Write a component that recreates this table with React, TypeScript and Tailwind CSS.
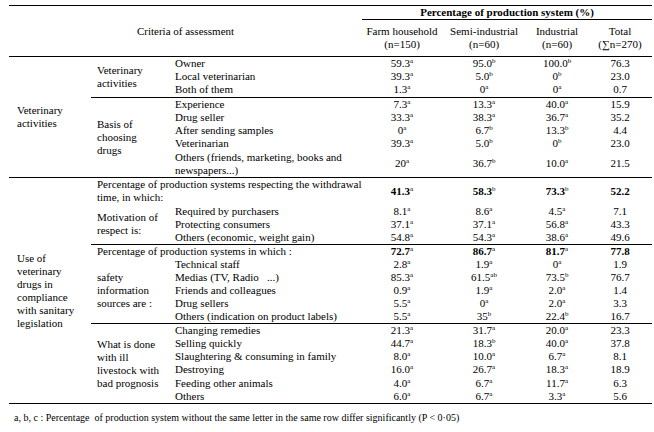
import React from "react";

type V = [string, string];

const FONT = { fontFamily: '"Liberation Serif", "Times New Roman", serif' };

function Val({ v, bold }: { v: V; bold?: boolean }) {
  return (
    <span className={bold ? "font-bold" : ""}>
      {v[0]}
      {v[1] && <sup className="text-[7px] -top-[4px] font-normal">{v[1]}</sup>}
    </span>
  );
}

// one data row: label in col 3 (or spanning cols 2-3), then 4 value cells
function Cells({
  vals,
  total,
  bold,
  top,
}: {
  vals: V[];
  total: string;
  bold?: boolean;
  top?: boolean;
}) {
  const b = top ? "border-t border-black" : "";
  return (
    <>
      {vals.map((v, i) => (
        <td key={i} className={`p-0 text-center ${b}`}>
          <Val v={v} bold={bold} />
        </td>
      ))}
      <td className={`p-0 text-center ${b} ${bold ? "font-bold" : ""}`}>{total}</td>
    </>
  );
}

const lbl = "p-0 pl-[5px] text-left whitespace-nowrap";
const grp = "p-0 pl-[6px] text-left align-middle border-t border-black";

export default function App() {
  return (
    <div className="min-h-[432px] w-[654px] bg-white pl-[9px] pt-[5px] text-black" style={FONT}>
      <table className="w-[643px] table-fixed border-collapse text-[11px] leading-[13px]">
        <colgroup>
          <col className="w-[82px]" />
          <col className="w-[79px]" />
          <col className="w-[192px]" />
          <col className="w-[80px]" />
          <col className="w-[84px]" />
          <col className="w-[62px]" />
          <col className="w-[64px]" />
        </colgroup>
        <thead>
          <tr className="h-[14px]">
            <th colSpan={3} rowSpan={2} className="border-t border-black p-0 text-center font-normal">
              Criteria of assessment
            </th>
            <th colSpan={4} className="border-y border-black p-0 text-center font-bold">
              Percentage of production system (%)
            </th>
          </tr>
          <tr className="h-[37px]">
            <th className="p-0 font-normal">Farm household<br />(n=150)</th>
            <th className="p-0 font-normal">Semi-industrial<br />(n=60)</th>
            <th className="p-0 font-normal">Industrial<br />(n=60)</th>
            <th className="p-0 font-normal">Total<br />(∑n=270)</th>
          </tr>
        </thead>
        <tbody>
          {/* Veterinary activities */}
          <tr className="h-[13px]">
            <td rowSpan={8} className="border-t border-black p-0 pl-2 text-left align-middle">
              Veterinary<br />activities
            </td>
            <td rowSpan={3} className={grp}>Veterinary<br />activities</td>
            <td className={`${lbl} border-t border-black`}>Owner</td>
            <Cells top vals={[["59.3", "a"], ["95.0", "b"], ["100.0", "b"]]} total="76.3" />
          </tr>
          <tr className="h-[13px]">
            <td className={lbl}>Local veterinarian</td>
            <Cells vals={[["39.3", "a"], ["5.0", "b"], ["0", "b"]]} total="23.0" />
          </tr>
          <tr className="h-[14px]">
            <td className={lbl}>Both of them</td>
            <Cells vals={[["1.3", "a"], ["0", "a"], ["0", "a"]]} total="0.7" />
          </tr>
          <tr className="h-[13px]">
            <td rowSpan={5} className={grp}>Basis of<br />choosing<br />drugs</td>
            <td className={`${lbl} border-t border-black`}>Experience</td>
            <Cells top vals={[["7.3", "a"], ["13.3", "a"], ["40.0", "a"]]} total="15.9" />
          </tr>
          <tr className="h-[13px]">
            <td className={lbl}>Drug seller</td>
            <Cells vals={[["33.3", "a"], ["38.3", "a"], ["36.7", "a"]]} total="35.2" />
          </tr>
          <tr className="h-[13px]">
            <td className={lbl}>After sending samples</td>
            <Cells vals={[["0", "a"], ["6.7", "b"], ["13.3", "b"]]} total="4.4" />
          </tr>
          <tr className="h-[14px]">
            <td className={lbl}>Veterinarian</td>
            <Cells vals={[["39.3", "a"], ["5.0", "b"], ["0", "b"]]} total="23.0" />
          </tr>
          <tr className="h-[27px]">
            <td className={lbl}>Others (friends, marketing, books and<br />newspapers...)</td>
            <Cells vals={[["20", "a"], ["36.7", "b"], ["10.0", "a"]]} total="21.5" />
          </tr>

          {/* Use of veterinary drugs */}
          <tr className="h-[27px]">
            <td rowSpan={19} className="border-t border-black p-0 pl-2 text-left align-middle">
              Use of<br />veterinary<br />drugs in<br />compliance<br />with sanitary<br />legislation
            </td>
            <td colSpan={2} className="border-t border-black p-0 pl-[6px] text-left whitespace-nowrap">
              Percentage of production systems respecting the withdrawal<br />time, in which:
            </td>
            <Cells top bold vals={[["41.3", "a"], ["58.3", "b"], ["73.3", "b"]]} total="52.2" />
          </tr>
          <tr className="h-[13px]">
            <td rowSpan={3} className="p-0 pl-[6px] text-left align-middle">Motivation of<br />respect is:</td>
            <td className={lbl}>Required by purchasers</td>
            <Cells vals={[["8.1", "a"], ["8.6", "a"], ["4.5", "a"]]} total="7.1" />
          </tr>
          <tr className="h-[13px]">
            <td className={lbl}>Protecting consumers</td>
            <Cells vals={[["37.1", "a"], ["37.1", "a"], ["56.8", "a"]]} total="43.3" />
          </tr>
          <tr className="h-[14px]">
            <td className={lbl}>Others (economic, weight gain)</td>
            <Cells vals={[["54.8", "a"], ["54.3", "a"], ["38.6", "a"]]} total="49.6" />
          </tr>
          <tr className="h-[13px]">
            <td colSpan={2} className="border-t border-black p-0 pl-[6px] text-left whitespace-nowrap">
              Percentage of production systems in which :
            </td>
            <Cells top bold vals={[["72.7", "a"], ["86.7", "a"], ["81.7", "a"]]} total="77.8" />
          </tr>
          <tr className="h-[13px]">
            <td rowSpan={5} className="p-0 pl-[6px] text-left align-middle">safety<br />information<br />sources are :</td>
            <td className={lbl}>Technical staff</td>
            <Cells vals={[["2.8", "a"], ["1.9", "a"], ["0", "a"]]} total="1.9" />
          </tr>
          <tr className="h-[13px]">
            <td className={lbl}>Medias (TV, Radio &nbsp; ...)</td>
            <Cells vals={[["85.3", "a"], ["61.5", "ab"], ["73.5", "b"]]} total="76.7" />
          </tr>
          <tr className="h-[13px]">
            <td className={lbl}>Friends and colleagues</td>
            <Cells vals={[["0.9", "a"], ["1.9", "a"], ["2.0", "a"]]} total="1.4" />
          </tr>
          <tr className="h-[13px]">
            <td className={lbl}>Drug sellers</td>
            <Cells vals={[["5.5", "a"], ["0", "a"], ["2.0", "a"]]} total="3.3" />
          </tr>
          <tr className="h-[13px]">
            <td className={lbl}>Others (indication on product labels)</td>
            <Cells vals={[["5.5", "a"], ["35", "b"], ["22.4", "b"]]} total="16.7" />
          </tr>
          <tr className="h-[13px]">
            <td rowSpan={6} className={grp}>What is done<br />with ill<br />livestock with<br />bad prognosis</td>
            <td className={`${lbl} border-t border-black`}>Changing remedies</td>
            <Cells top vals={[["21.3", "a"], ["31.7", "a"], ["20.0", "a"]]} total="23.3" />
          </tr>
          <tr className="h-[13px]">
            <td className={lbl}>Selling quickly</td>
            <Cells vals={[["44.7", "a"], ["18.3", "b"], ["40.0", "a"]]} total="37.8" />
          </tr>
          <tr className="h-[13px]">
            <td className={lbl}>Slaughtering &amp; consuming in family</td>
            <Cells vals={[["8.0", "a"], ["10.0", "a"], ["6.7", "a"]]} total="8.1" />
          </tr>
          <tr className="h-[13px]">
            <td className={lbl}>Destroying</td>
            <Cells vals={[["16.0", "a"], ["26.7", "a"], ["18.3", "a"]]} total="18.9" />
          </tr>
          <tr className="h-[14px]">
            <td className={lbl}>Feeding other animals</td>
            <Cells vals={[["4.0", "a"], ["6.7", "a"], ["11.7", "a"]]} total="6.3" />
          </tr>
          <tr className="h-[13px] border-b border-black">
            <td className={lbl}>Others</td>
            <Cells vals={[["6.0", "a"], ["6.7", "a"], ["3.3", "a"]]} total="5.6" />
          </tr>
        </tbody>
      </table>
      <p className="mt-[8px] pl-[5px] text-[10px] leading-[12px]">
        a, b, c : Percentage &nbsp;of production system without the same letter in the same row differ significantly (P &lt; 0·05)
      </p>
    </div>
  );
}
